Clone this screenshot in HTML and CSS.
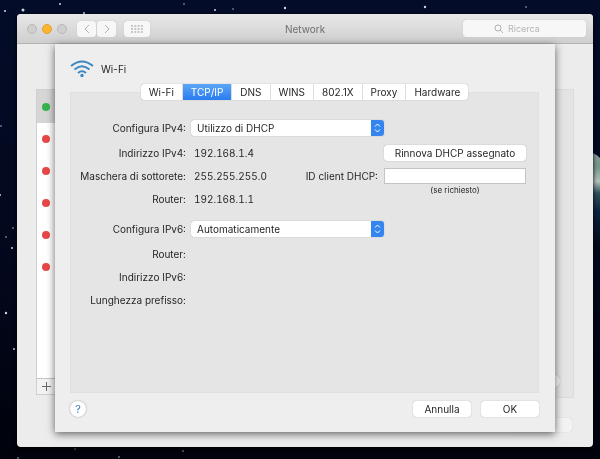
FILE: index.html
```html
<!DOCTYPE html>
<html lang="it">

<head>
    <meta charset="UTF-8">
    <meta name="viewport" content="width=device-width, initial-scale=1.0">
    <title>Network</title>
    <link rel="stylesheet" href="styles.css">
</head>

<body>

    <svg class="sky" viewBox="0 0 600 459" preserveAspectRatio="xMidYMid slice" aria-hidden="true">
        <defs>
            <linearGradient id="night" x1="0" y1="0" x2="0" y2="1">
                <stop offset="0" stop-color="#030c28" />
                <stop offset="0.6" stop-color="#02071c" />
                <stop offset="1" stop-color="#00020b" />
            </linearGradient>
            <linearGradient id="earth" x1="0" y1="0" x2="0" y2="1">
                <stop offset="0" stop-color="#8c9a9d" />
                <stop offset="0.15" stop-color="#75958a" />
                <stop offset="0.3" stop-color="#b4bfbd" />
                <stop offset="0.42" stop-color="#2f5058" />
                <stop offset="0.6" stop-color="#0c2140" />
                <stop offset="1" stop-color="#020716" />
            </linearGradient>
        </defs>
        <rect width="600" height="459" fill="url(#night)" />
        <path d="M590 152 Q596 154 600 158 V250 H590 Z" fill="url(#earth)" />
        <g fill="#c9d6ea">
            <circle cx="60" cy="4" r="1" />
            <circle cx="5" cy="11" r="1" />
            <circle cx="23" cy="10" r="1.5" />
            <circle cx="84" cy="13" r="1" />
            <circle cx="285" cy="8" r="1.2" />
            <circle cx="215" cy="10" r="1" />
            <circle cx="425" cy="7" r="1.2" />
            <circle cx="0" cy="195" r="1" />
            <circle cx="12" cy="248" r="1" />
            <circle cx="6" cy="313" r="1.2" />
            <circle cx="14" cy="349" r="1" />
        </g>
        <g fill="#65748f">
            <circle cx="233" cy="9" r="1" />
            <circle cx="526" cy="7" r="1" />
            <circle cx="184" cy="4" r="1" />
            <circle cx="1" cy="126" r="1" />
            <circle cx="13" cy="228" r="1" />
            <circle cx="6" cy="237" r="1" />
            <circle cx="75" cy="449" r="1" />
            <circle cx="119" cy="457" r="1" />
            <circle cx="18" cy="458" r="1" />
            <circle cx="183" cy="451" r="1" />
        </g>
    </svg>

    <div class="window">
        <header class="titlebar">
            <div class="lights">
                <span class="light"></span>
                <span class="light minimize"></span>
                <span class="light"></span>
            </div>
            <div class="nav">
                <button class="tool" type="button" aria-label="Indietro">
                    <svg width="6" height="10" viewBox="0 0 6 10"><path d="M5 1 L1 5 L5 9" /></svg>
                </button>
                <button class="tool" type="button" aria-label="Avanti">
                    <svg width="6" height="10" viewBox="0 0 6 10"><path d="M1 1 L5 5 L1 9" /></svg>
                </button>
            </div>
            <button class="tool grid" type="button" aria-label="Mostra tutte">
                <svg width="12" height="8" viewBox="0 0 12 8">
                    <path stroke-dasharray="2 1.3" d="M0 1H12M0 4H12M0 7H12" />
                </svg>
            </button>
            <h1>Network</h1>
            <label class="search">
                <svg width="10" height="10" viewBox="0 0 10 10"><circle cx="4" cy="4" r="3" /><path d="M6 6 L9 9" /></svg>
                <input type="search" placeholder="Ricerca" aria-label="Ricerca">
            </label>
        </header>

        <main class="content">
            <div class="backdrop">
                <div class="services">
                    <ul>
                        <li class="selected"><span class="dot on"></span></li>
                        <li><span class="dot"></span></li>
                        <li><span class="dot"></span></li>
                        <li><span class="dot"></span></li>
                        <li><span class="dot"></span></li>
                        <li><span class="dot"></span></li>
                    </ul>
                    <button class="add" type="button" aria-label="Aggiungi">
                        <svg width="9" height="9" viewBox="0 0 9 9"><path d="M4.5 0V9M0 4.5H9" /></svg>
                    </button>
                </div>
                <div class="details">
                    <div class="pane"><span class="round"></span></div>
                    <span class="apply"></span>
                </div>
            </div>

            <form class="sheet">
                <div class="heading">
                    <svg width="24" height="18" viewBox="0 0 24 18" aria-hidden="true">
                        <g fill="none" stroke="#3c88c4" stroke-width="2">
                            <path d="M1 6 Q12 -3 23 6" />
                            <path d="M4.500 9.500 Q12 3 19.500 9.500" />
                            <path d="M8 13 Q12 9.500 16 13" />
                        </g>
                        <circle cx="12" cy="15.500" r="1.700" fill="#3c88c4" />
                    </svg>
                    <h2>Wi-Fi</h2>
                </div>

                <nav class="tabs">
                    <button type="button">Wi-Fi</button>
                    <button type="button" class="active">TCP/IP</button>
                    <button type="button">DNS</button>
                    <button type="button">WINS</button>
                    <button type="button">802.1X</button>
                    <button type="button">Proxy</button>
                    <button type="button">Hardware</button>
                </nav>

                <section class="panel">
                    <div class="row config">
                        <label class="name" for="ipv4">Configura IPv4:</label>
                        <span class="select">
                            <select id="ipv4">
                                <option>Utilizzo di DHCP</option>
                            </select>
                            <svg width="13" height="16" viewBox="0 0 13 16"><path d="M4 6.500 L6.500 4 L9 6.500M4 9.500 L6.500 12 L9 9.500" /></svg>
                        </span>
                    </div>
                    <div class="row">
                        <span class="name">Indirizzo IPv4:</span>
                        <span class="value">192.168.1.4</span>
                        <button class="push renew" type="button">Rinnova DHCP assegnato</button>
                    </div>
                    <div class="row">
                        <span class="name">Maschera di sottorete:</span>
                        <span class="value">255.255.255.0</span>
                        <label class="client" for="client">ID client DHCP:</label>
                        <input id="client" type="text">
                    </div>
                    <div class="row">
                        <span class="name">Router:</span>
                        <span class="value">192.168.1.1</span>
                        <small>(se richiesto)</small>
                    </div>
                    <div class="row config second">
                        <label class="name" for="ipv6">Configura IPv6:</label>
                        <span class="select">
                            <select id="ipv6">
                                <option>Automaticamente</option>
                            </select>
                            <svg width="13" height="16" viewBox="0 0 13 16"><path d="M4 6.500 L6.500 4 L9 6.500M4 9.500 L6.500 12 L9 9.500" /></svg>
                        </span>
                    </div>
                    <div class="row"><span class="name">Router:</span></div>
                    <div class="row"><span class="name">Indirizzo IPv6:</span></div>
                    <div class="row"><span class="name">Lunghezza prefisso:</span></div>
                </section>

                <footer class="actions">
                    <button class="help" type="button">?</button>
                    <button class="push" type="button">Annulla</button>
                    <button class="push" type="submit">OK</button>
                </footer>
            </form>
        </main>
    </div>

</body>

</html>
```
FILE: styles.css
```css
* {
    box-sizing: border-box;
}

body {
    margin: 0;
    padding: 14px 7px 12px 17px;
    min-height: 100vh;
    display: flex;
    background-color: #02071c;
    font-family: Inter, "Liberation Sans", sans-serif;
    font-size: 10px;
    color: #262626;
}

button,
input,
select {
    font: inherit;
    color: inherit;
    margin: 0;
    padding: 0;
}

h1,
h2 {
    margin: 0;
    font-size: inherit;
    font-weight: normal;
}

.sky {
    position: fixed;
    top: 0;
    left: 0;
    width: 100%;
    height: 100%;
    z-index: -1;
}

.window {
    flex: 1;
    display: flex;
    flex-direction: column;
    border-radius: 4px;
    overflow: hidden;
    background-color: #ececec;
    box-shadow: 0 2px 4px #000;
}

/* title bar */

.titlebar {
    display: flex;
    align-items: center;
    height: 30px;
    padding: 0 7px 0 10px;
    background: linear-gradient(#e8e8e8, #cfcfcf);
    border-bottom: 1px solid #b4b4b4;
}

.lights {
    display: flex;
    gap: 5px;
}

.light {
    width: 10px;
    height: 10px;
    border-radius: 50%;
    border: 1px solid #b9b9b9;
    background-color: #cfcfcf;
}

.light.minimize {
    background-color: #fdb52f;
    border-color: #e0a033;
}

.nav {
    display: flex;
    gap: 1px;
    margin: 0 8px 0 10px;
}

.tool {
    display: flex;
    align-items: center;
    justify-content: center;
    width: 19px;
    height: 16px;
    border: 0;
    border-radius: 3px;
    background-color: #f7f7f7;
    box-shadow: 0 0 1px #aaa;
}

.tool.grid {
    width: 26px;
}

.tool path,
.search path,
.search circle {
    fill: none;
    stroke: #b0b0b0;
}

.tool.grid path {
    stroke-width: 2;
    stroke: #c8c8c8;
}

h1 {
    flex: 1;
    padding-left: 135px;
    color: #6e6e6e;
}

.search {
    display: flex;
    align-items: center;
    gap: 4px;
    width: 123px;
    height: 17px;
    padding-left: 31px;
    border-radius: 3px;
    background-color: #f7f7f7;
    box-shadow: 0 0 1px #aaa;
}

.search input {
    width: 60px;
    border: 0;
    background: none;
    font-size: 9px;
}

.search input::placeholder {
    color: #b5b5b5;
}

/* window behind the sheet */

.content {
    flex: 1;
    display: grid;
}

.backdrop,
.sheet {
    grid-area: 1 / 1;
}

.backdrop {
    display: flex;
    justify-content: space-between;
    padding: 45px 19px 15px 19px;
}

.services {
    display: flex;
    flex-direction: column;
    width: 100px;
    margin-bottom: 37px;
    border: 1px solid #cfcfcf;
    background-color: #fff;
}

.services ul {
    flex: 1;
    margin: 0;
    padding: 0;
    list-style: none;
}

.services li {
    display: flex;
    align-items: center;
    height: 32px;
    padding-left: 5px;
}

.services .selected {
    height: 33px;
    background-color: #d6d6d6;
}

.dot {
    width: 8px;
    height: 8px;
    border-radius: 50%;
    background-color: #e8474a;
}

.dot.on {
    background-color: #35b44e;
}

.add {
    height: 16px;
    padding-left: 5px;
    border: 0;
    border-top: 1px solid #c4c4c4;
    background-color: #f3f3f3;
    text-align: left;
}

.add svg {
    display: block;
}

.add path {
    stroke: #6a6a6a;
}

.details {
    flex: 1;
    display: flex;
    flex-direction: column;
    align-items: flex-end;
    gap: 20px;
}

.pane {
    flex: 1;
    display: flex;
    align-items: flex-end;
    justify-content: flex-end;
    width: 100%;
    padding: 0 13px 9px 0;
    border: 1px solid #dcdcdc;
    background-color: #e4e4e4;
}

.round {
    width: 14px;
    height: 14px;
    border-radius: 50%;
    background-color: #f8f8f8;
    box-shadow: 0 0 1px #999;
}

.apply {
    width: 60px;
    height: 14px;
    margin-right: 2px;
    border-radius: 3px;
    background-color: #f3f3f3;
    box-shadow: 0 0 1px #bbb;
}

/* sheet */

.sheet {
    display: flex;
    flex-direction: column;
    margin: 0 38px 15px 38px;
    padding: 16px 16px 15px 15px;
    background-color: #eee;
    box-shadow: 0 2px 8px rgba(0, 0, 0, 0.6);
    z-index: 1;
}

.heading {
    display: flex;
    align-items: center;
    gap: 7px;
    height: 18px;
}

.tabs {
    display: flex;
    align-self: center;
    height: 16px;
    margin: 6px 0 -8px 0;
    border-radius: 3px;
    background-color: #fff;
    box-shadow: 0 0 1px #888;
    z-index: 1;
}

.tabs button {
    padding: 0 8px;
    border: 0;
    border-left: 1px solid #ddd;
    background: none;
}

.tabs button:first-child {
    border-left: 0;
}

.tabs .active {
    background: linear-gradient(#5ba7f5, #2a7cf0);
    color: #fff;
}

.panel {
    flex: 1;
    display: flex;
    flex-direction: column;
    gap: 7px;
    padding: 27px 12px 0 0;
    border: 1px solid #e0e0e0;
    background-color: #e5e5e5;
}

.row {
    display: flex;
    align-items: center;
    height: 16px;
}

.row.config {
    margin-bottom: 2px;
}

.row.second {
    margin-top: 7px;
}

.name {
    width: 115px;
    text-align: right;
}

.value {
    margin-left: 8px;
    font-variant-numeric: tabular-nums;
}

.select {
    display: flex;
    width: 193px;
    height: 16px;
    margin-left: 5px;
    border-radius: 3px;
    overflow: hidden;
    background-color: #fff;
    box-shadow: 0 0 1px #888;
}

.select select {
    flex: 1;
    padding-left: 6px;
    border: 0;
    appearance: none;
    background: none;
}

.select svg {
    background-color: #3585f0;
}

.select path {
    fill: none;
    stroke: #fff;
}

.push {
    height: 16px;
    border: 0;
    border-radius: 3px;
    background-color: #fff;
    box-shadow: 0 0 1px #888;
}

.renew,
.row input,
.row small {
    width: 142px;
}

.renew,
.row small {
    margin-left: auto;
}

.client {
    margin: 0 6px 0 auto;
}

.row input {
    height: 16px;
    border: 1px solid #c4c4c4;
    background-color: #fff;
}

/* hint sits close under the text box */
.row small {
    align-self: flex-start;
    margin-top: -5px;
    line-height: 1;
    font-size: 8px;
    text-align: center;
}

.actions {
    display: flex;
    align-items: center;
    gap: 10px;
    margin-top: 8px;
}

.actions .push {
    width: 58px;
}

.help {
    width: 16px;
    height: 16px;
    margin-right: auto;
    border: 0;
    border-radius: 50%;
    background-color: #fff;
    box-shadow: 0 0 2px #999;
    font-size: 11px;
    color: #3d7cc9;
}
```
